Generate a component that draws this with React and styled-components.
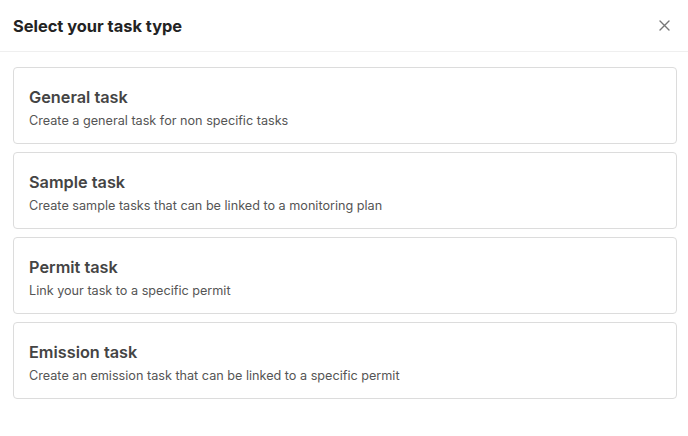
import React from 'react';
import styled, { createGlobalStyle } from 'styled-components';

const GlobalStyle = createGlobalStyle`
  html, body {
    margin: 0;
    padding: 0;
    background: #ffffff;
    font-family: Inter, "Noto Sans", sans-serif;
  }
`;

const Modal = styled.div`
  width: 688px;
  height: 436px;
  background: #fff;
  display: flex;
  flex-direction: column;
`;

const Header = styled.div`
  height: 52px;
  box-sizing: border-box;
  display: flex;
  align-items: center;
  justify-content: space-between;
  padding: 0 17px 0 13px;
  border-bottom: 1px solid #efefef;
`;

const Title = styled.h2`
  margin: 0;
  font-size: 16.4px;
  font-weight: 700;
  color: #232323;
`;

const CloseButton = styled.button`
  border: none;
  background: none;
  padding: 0;
  width: 14px;
  height: 14px;
  display: flex;
  align-items: center;
  justify-content: center;
  cursor: pointer;
  color: #777;
`;

const List = styled.div`
  display: flex;
  flex-direction: column;
  gap: 8px;
  padding: 15px 11px 0 13px;
`;

const Card = styled.button`
  height: 77px;
  box-sizing: border-box;
  border: 1px solid #dcdcdc;
  border-radius: 4px;
  background: #fff;
  text-align: left;
  padding: 4px 15px 0;
  display: flex;
  flex-direction: column;
  justify-content: center;
  gap: 6px;
  cursor: pointer;
  font-family: inherit;
`;

const CardTitle = styled.span`
  font-size: 16.3px;
  font-weight: 600;
  color: #444;
`;

const CardText = styled.span`
  font-size: 12.65px;
  color: #555;
`;

const types = [
  { title: 'General task', text: 'Create a general task for non specific tasks' },
  { title: 'Sample task', text: 'Create sample tasks that can be linked to a monitoring plan' },
  { title: 'Permit task', text: 'Link your task to a specific permit' },
  { title: 'Emission task', text: 'Create an emission task that can be linked to a specific permit' },
];

export default function App() {
  return (
    <>
      <GlobalStyle />
      <Modal>
        <Header>
          <Title>Select your task type</Title>
          <CloseButton aria-label="Close">
            <svg width="11" height="11" viewBox="0 0 11 11">
              <path d="M1 1L10 10M10 1L1 10" stroke="currentColor" strokeWidth="1.4" strokeLinecap="round" />
            </svg>
          </CloseButton>
        </Header>
        <List>
          {types.map(t => (
            <Card key={t.title}>
              <CardTitle>{t.title}</CardTitle>
              <CardText>{t.text}</CardText>
            </Card>
          ))}
        </List>
      </Modal>
    </>
  );
}
